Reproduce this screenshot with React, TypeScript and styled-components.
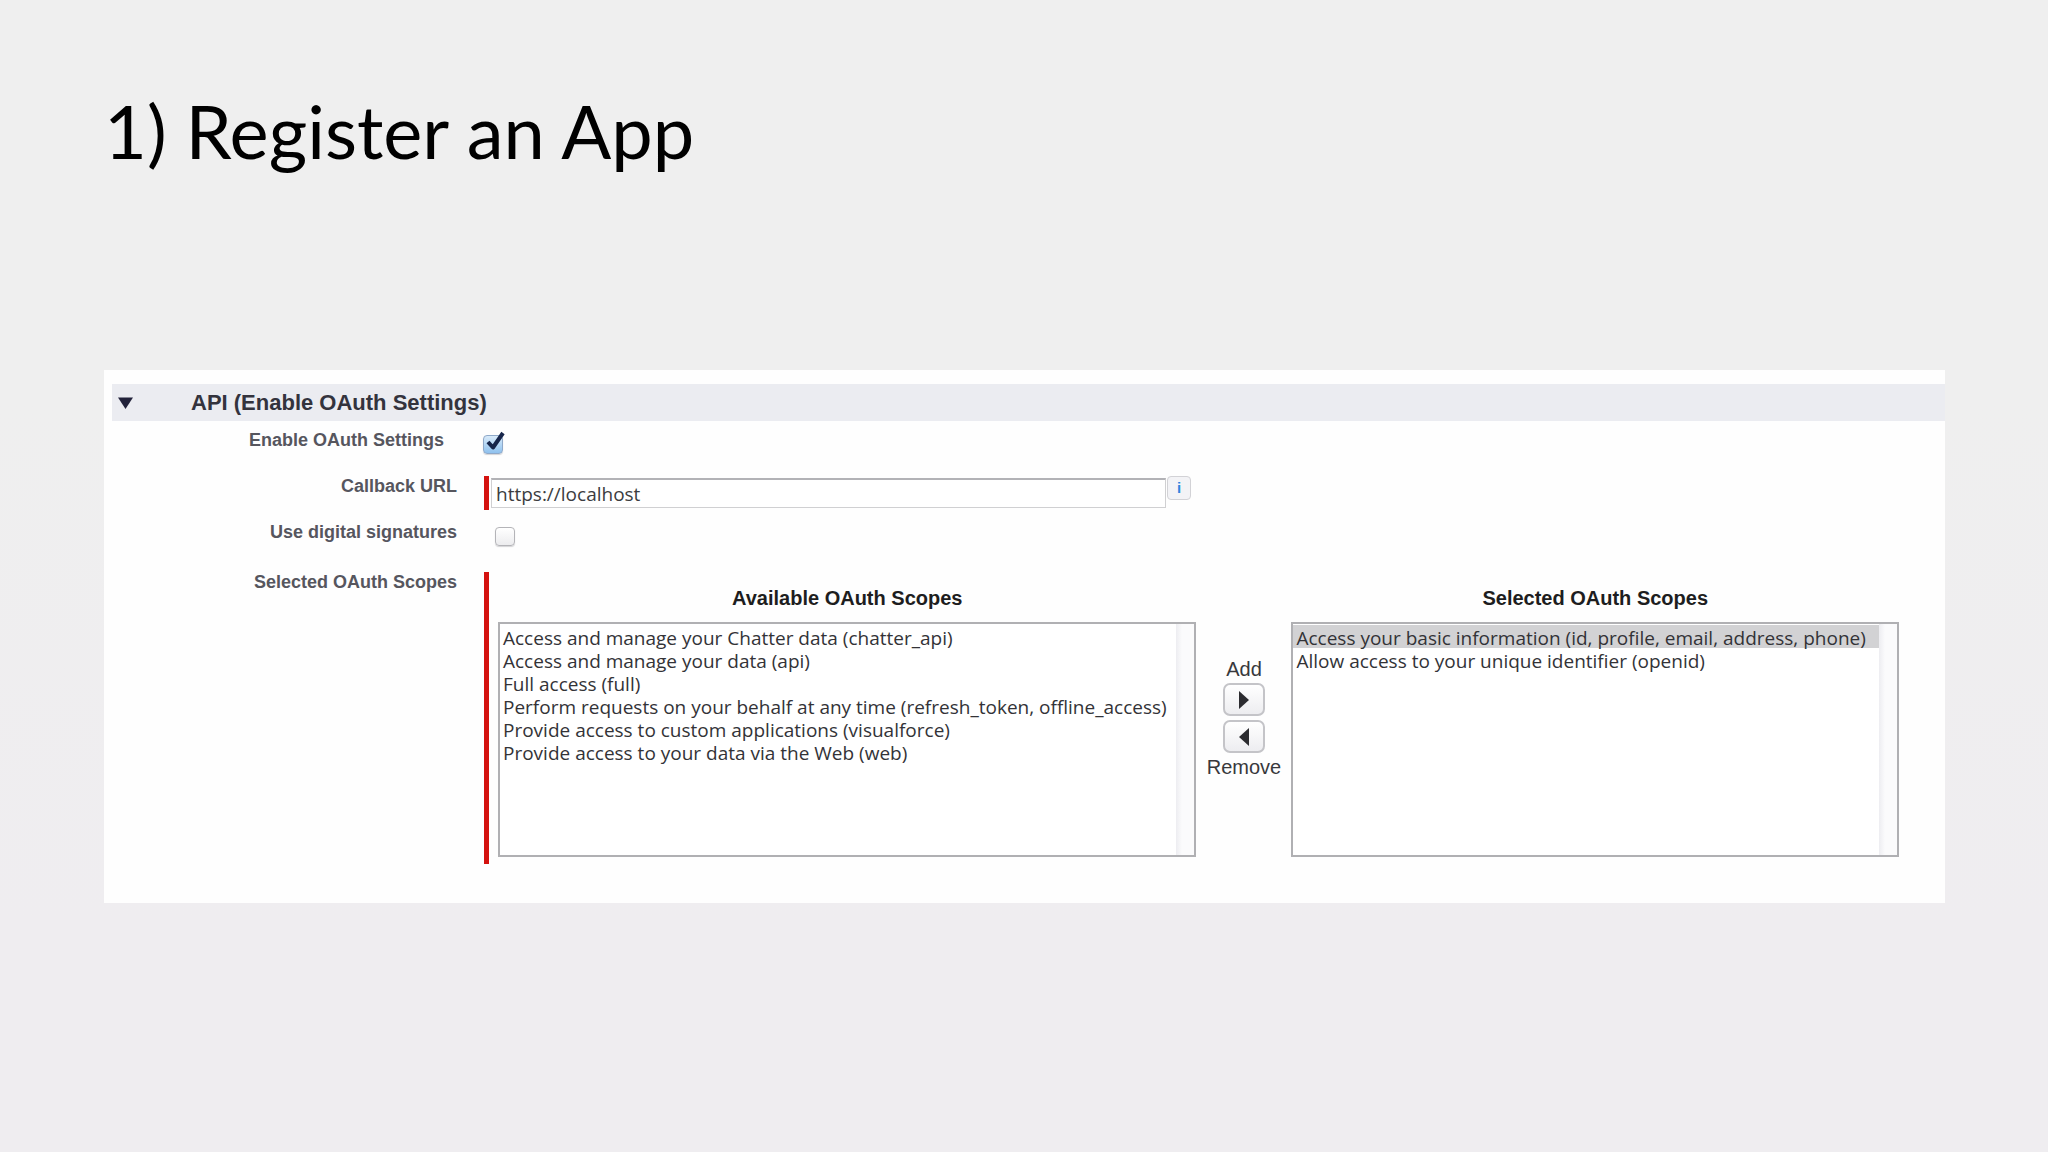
import React, { useState } from "react";
import styled, { createGlobalStyle } from "styled-components";

const GlobalStyle = createGlobalStyle`
  *, *::before, *::after { box-sizing: border-box; }
  body {
    margin: 0;
    background: #efedf0;
    font-family: "Liberation Sans", Arial, sans-serif;
  }
`;

const Slide = styled.main`
  min-height: 100vh;
  padding: 83px 103px 80px 104px;
  background: linear-gradient(#efefef 0%, #efefef 35%, #efedf0 80%);
`;

const Title = styled.h1`
  margin: 0 0 191px;
  font-family: Lato, sans-serif;
  font-size: 74px;
  font-weight: 400;
  line-height: 96px;
  color: #000;
`;

const Panel = styled.section`
  padding: 14px 0 39px;
  background: #fefefe;
`;

const SectionHeader = styled.header`
  display: flex;
  align-items: center;
  gap: 58px;
  height: 37px;
  margin: 0 0 7px 8px;
  padding-left: 6px;
  background: #ebecf1;
`;

const Toggle = styled.button`
  display: flex;
  padding: 0;
  border: 0;
  background: none;
`;

const SectionTitle = styled.h2`
  margin: 0;
  font-size: 22px;
  line-height: 28px;
  color: #33333d;
`;

const Row = styled.div<{ $last?: boolean }>`
  display: grid;
  grid-template-columns: 353px minmax(0, 1fr);
  column-gap: 26px;
  min-height: 46px;
  margin-top: ${(p) => (p.$last ? 4 : 0)}px;
  padding-right: 46px;
`;

const Label = styled.label<{ $inset?: boolean }>`
  padding-right: ${(p) => (p.$inset ? 13 : 0)}px;
  text-align: right;
  font-size: 18px;
  font-weight: 700;
  line-height: 24px;
  color: #56565e;
`;

const CheckCell = styled.div<{ $indent?: boolean }>`
  display: flex;
  align-items: center;
  height: 32px;
  padding-left: ${(p) => (p.$indent ? 12 : 0)}px;
`;

const CheckWrap = styled.span`
  position: relative;
  display: flex;
`;

const CheckInput = styled.input`
  appearance: none;
  width: 20px;
  height: 19px;
  margin: 0;
  border: 1px solid #b4b4b8;
  border-radius: 4px;
  background: linear-gradient(#fff, #ececee);
  box-shadow: 0 1px 1px #d4d4d6;
  &:checked {
    border-color: #8fa9c9;
    background: linear-gradient(#d9ebfa, #8fc1ee);
  }
`;

const CheckMark = styled.svg`
  position: absolute;
  left: 3px;
  bottom: 3px;
  pointer-events: none;
`;

const Required = styled.div`
  display: flex;
  margin: 2px 0 0 1px;
  border-left: 5px solid #d4120f;
`;

const UrlInput = styled.input`
  width: 675px;
  height: 30px;
  margin: 2px 0 2px 2px;
  padding: 0 4px;
  border: 1px solid #d0d0d2;
  border-top: 2px solid #b2b2b6;
  background: #fff;
  font-family: "Open Sans", sans-serif;
  font-size: 19px;
  line-height: 24px;
  color: #3c3c40;
`;

const InfoButton = styled.button`
  width: 24px;
  height: 24px;
  margin-left: 1px;
  padding: 0;
  border: 1px solid #d2d2d6;
  border-radius: 4px;
  background: #f3f3f6;
  font-family: "Liberation Sans", Arial, sans-serif;
  font-size: 15px;
  font-weight: 700;
  line-height: 20px;
  color: #2f86dd;
`;

const Scopes = styled.div`
  display: flex;
  flex: 1;
  padding: 14px 0 7px 9px;
`;

const ScopeColumn = styled.div<{ $share: number }>`
  display: flex;
  flex: ${(p) => p.$share} 1 0;
  flex-direction: column;
  gap: 12px;
  min-width: 0;
`;

const ScopeTitle = styled.label`
  text-align: center;
  font-size: 20px;
  font-weight: 700;
  line-height: 24px;
  color: #1d1d20;
`;

const ScopeList = styled.select`
  width: 100%;
  height: 235px;
  padding: 1px 18px 0 0;
  border: 2px solid #b0b0b3;
  border-radius: 0;
  outline: 0;
  overflow: hidden;
  background: linear-gradient(90deg, #ededf1, #fbfbfc 6px) right / 18px 100% no-repeat #fff;
  font-family: "Open Sans", sans-serif;
  font-size: 19px;
  color: #333337;
`;

const Scope = styled.option<{ $active?: boolean }>`
  height: 23px;
  min-height: 23px;
  padding: 0 3px;
  line-height: 23px;
  color: #333337;
  background: ${(p) => (p.$active ? "linear-gradient(#d2d2d4, #d2d2d4)" : "none")};
`;

const Transfer = styled.div`
  display: flex;
  flex: none;
  flex-direction: column;
  align-items: center;
  gap: 4px;
  width: 95px;
  padding-top: 73px;
  font-size: 20px;
  line-height: 20px;
  color: #38383c;
`;

const ArrowButton = styled.button`
  display: flex;
  align-items: center;
  justify-content: center;
  width: 42px;
  height: 33px;
  padding: 0;
  border: 2px solid #c4c4c8;
  border-radius: 7px;
  background: linear-gradient(#fff, #ededf0);
`;

const available = [
  "Access and manage your Chatter data (chatter_api)",
  "Access and manage your data (api)",
  "Full access (full)",
  "Perform requests on your behalf at any time (refresh_token, offline_access)",
  "Provide access to custom applications (visualforce)",
  "Provide access to your data via the Web (web)",
];

const selected = [
  "Access your basic information (id, profile, email, address, phone)",
  "Allow access to your unique identifier (openid)",
];

export default function App() {
  const [enabled, setEnabled] = useState(true);
  const [signed, setSigned] = useState(false);
  const [url, setUrl] = useState("https://localhost");

  return (
    <>
      <GlobalStyle />
      <Slide>
        <Title>1) Register an App</Title>
        <Panel>
          <SectionHeader>
            <Toggle type="button" aria-label="Collapse section">
              <svg width="15" height="12" viewBox="0 0 15 12">
                <path d="M0 0.5H15L7.5 12Z" fill="#22223a" />
              </svg>
            </Toggle>
            <SectionTitle>API (Enable OAuth Settings)</SectionTitle>
          </SectionHeader>

          <Row>
            <Label htmlFor="enable" $inset>Enable OAuth Settings</Label>
            <CheckCell>
              <CheckWrap>
                <CheckInput
                  id="enable"
                  type="checkbox"
                  checked={enabled}
                  onChange={(e) => setEnabled(e.target.checked)}
                />
                {enabled && (
                  <CheckMark width="19" height="20" viewBox="0 0 19 20">
                    <path d="M2 11L7 16.5L17 2" fill="none" stroke="#16254a" strokeWidth="4" strokeLinejoin="round" />
                  </CheckMark>
                )}
              </CheckWrap>
            </CheckCell>
          </Row>

          <Row>
            <Label htmlFor="callback">Callback URL</Label>
            <div>
              <Required>
                <UrlInput id="callback" type="text" value={url} onChange={(e) => setUrl(e.target.value)} />
                <InfoButton type="button" aria-label="Callback URL help">i</InfoButton>
              </Required>
            </div>
          </Row>

          <Row>
            <Label htmlFor="signatures">Use digital signatures</Label>
            <CheckCell $indent>
              <CheckInput
                id="signatures"
                type="checkbox"
                checked={signed}
                onChange={(e) => setSigned(e.target.checked)}
              />
            </CheckCell>
          </Row>

          <Row $last>
            <Label htmlFor="selected">Selected OAuth Scopes</Label>
            <Required>
              <Scopes>
                <ScopeColumn $share={699}>
                  <ScopeTitle htmlFor="available">Available OAuth Scopes</ScopeTitle>
                  <ScopeList id="available" multiple>
                    {available.map((s) => (
                      <Scope key={s}>{s}</Scope>
                    ))}
                  </ScopeList>
                </ScopeColumn>
                <Transfer>
                  <span>Add</span>
                  <ArrowButton type="button" aria-label="Add scope">
                    <svg width="10" height="18" viewBox="0 0 10 18">
                      <path d="M0 0L10 9L0 18Z" fill="#2c2c30" />
                    </svg>
                  </ArrowButton>
                  <ArrowButton type="button" aria-label="Remove scope">
                    <svg width="10" height="18" viewBox="0 0 10 18">
                      <path d="M10 0L0 9L10 18Z" fill="#2c2c30" />
                    </svg>
                  </ArrowButton>
                  <span>Remove</span>
                </Transfer>
                <ScopeColumn $share={608}>
                  <ScopeTitle htmlFor="selected">Selected OAuth Scopes</ScopeTitle>
                  <ScopeList id="selected" multiple defaultValue={[selected[0]]}>
                    {selected.map((s, i) => (
                      <Scope key={s} $active={i === 0}>{s}</Scope>
                    ))}
                  </ScopeList>
                </ScopeColumn>
              </Scopes>
            </Required>
          </Row>
        </Panel>
      </Slide>
    </>
  );
}
